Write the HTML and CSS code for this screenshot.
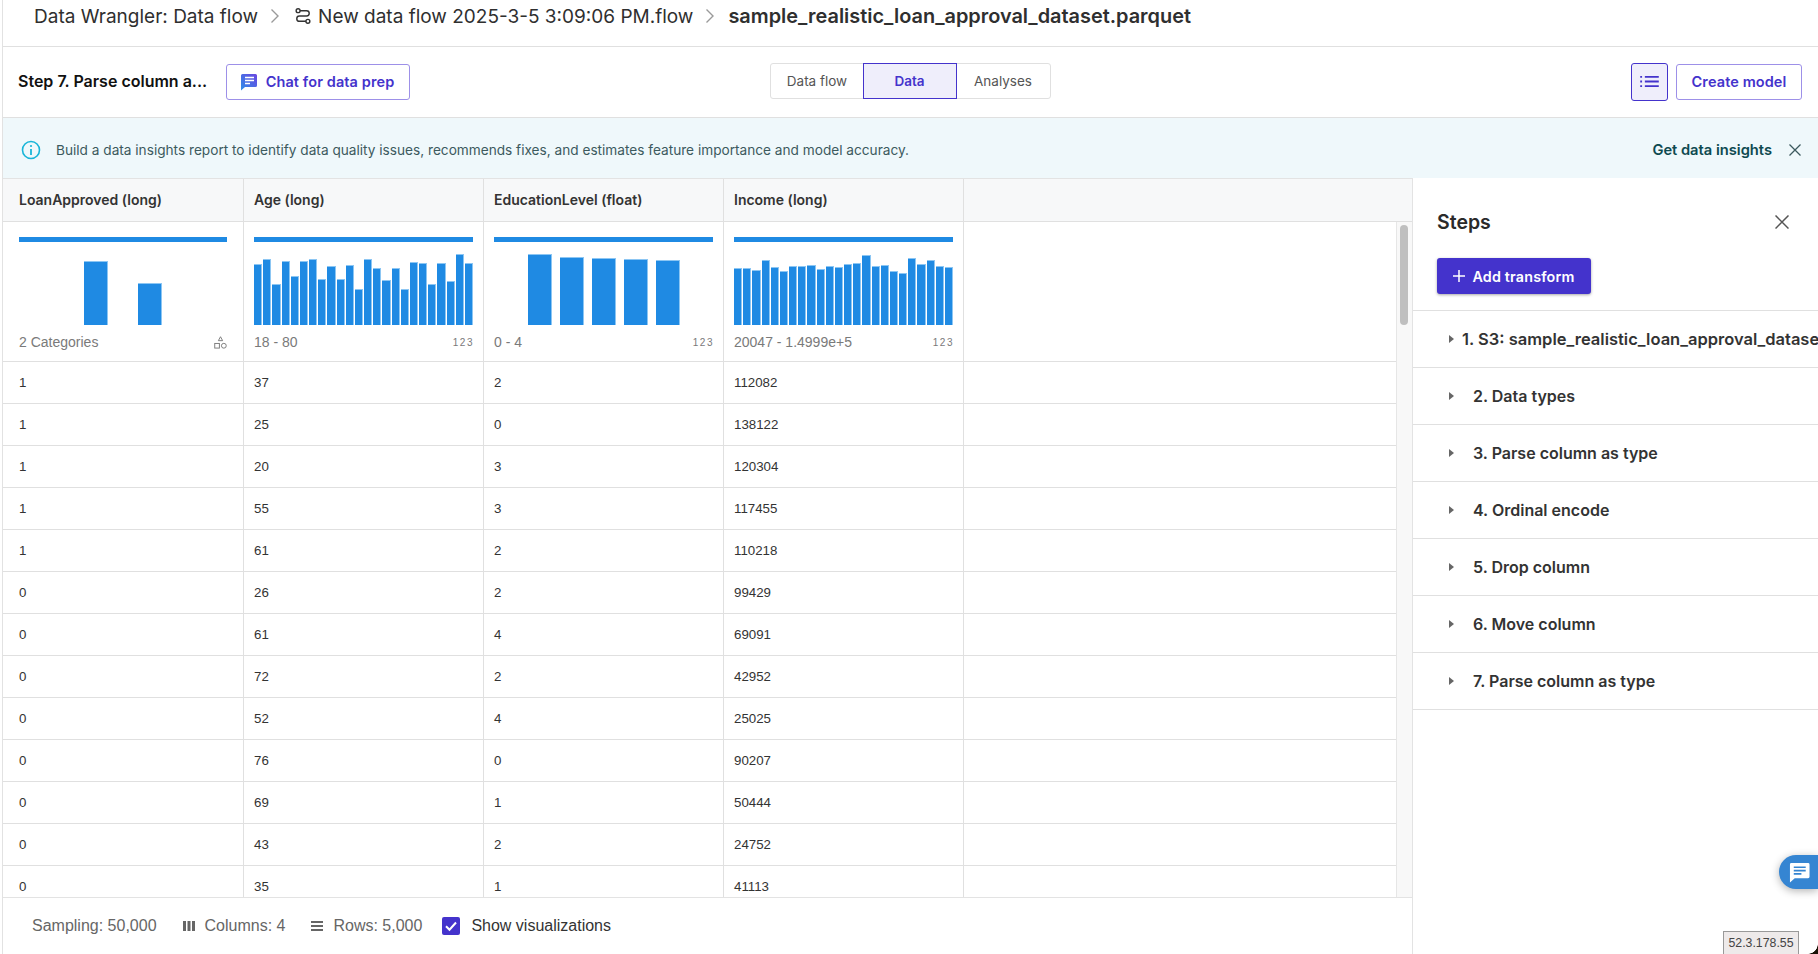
FILE: index.html
```html
<!DOCTYPE html>
<html lang="en">
<head>
<meta charset="utf-8">
<title>Data Wrangler: Data flow</title>
<link rel="stylesheet" href="styles.css">
</head>
<body>
<div class="app">
  <header class="crumbs">
    <span>Data Wrangler: Data flow</span>
    <svg class="chev chev-first" viewBox="0 0 10 16" width="10" height="16"><path d="M1.5 1.5 8 8l-6.500 6.500" fill="none" stroke="#9a9a9a" stroke-width="1.400"/></svg>
    <svg class="flow" viewBox="0 0 18 18" width="16" height="16"><g fill="none" stroke="#333" stroke-width="1.600"><circle cx="3.500" cy="3" r="2.200"/><circle cx="14.500" cy="15" r="2.200"/><path d="M5.700 3H13a3 3 0 0 1 0 6H5a3 3 0 0 0 0 6h7.300"/></g></svg>
    <span>New data flow 2025-3-5 3:09:06 PM.flow</span>
    <svg class="chev" viewBox="0 0 10 16" width="10" height="16"><path d="M1.5 1.5 8 8l-6.500 6.500" fill="none" stroke="#9a9a9a" stroke-width="1.400"/></svg>
    <strong>sample_realistic_loan_approval_dataset.parquet</strong>
  </header>

  <div class="toolbar">
    <div class="tool-left">
      <span class="step-name">Step 7. Parse column a...</span>
      <button class="btn btn-outline chat-btn">
        <svg viewBox="0 0 18 18" width="18" height="18"><defs><linearGradient id="cg" x1="0" y1="1" x2="1" y2="0"><stop offset="0" stop-color="#2f8fe8"/><stop offset="1" stop-color="#6a45e0"/></linearGradient></defs><path d="M2.500 1h13A1.500 1.500 0 0 1 17 2.500v10a1.500 1.500 0 0 1-1.500 1.500H5l-4 3.500V2.500A1.500 1.500 0 0 1 2.500 1z" fill="url(#cg)"/><path d="M5 4.500h9M5 7.500h9M5 10.500h5" stroke="#fff" stroke-width="1.500"/></svg>
        Chat for data prep
      </button>
    </div>
    <div class="tabs">
      <span class="tab">Data flow</span>
      <span class="tab tab-active">Data</span>
      <span class="tab">Analyses</span>
    </div>
    <div class="tool-right">
      <button class="list-btn" aria-label="Steps">
        <svg viewBox="0 0 20 14" width="19" height="13"><path d="M0 2h2M5 2h15M0 7h2M5 7h15M0 12h2M5 12h15" stroke="#4433cc" stroke-width="2"/></svg>
      </button>
      <button class="btn btn-outline create-btn">Create model</button>
    </div>
  </div>

  <div class="banner">
    <svg viewBox="0 0 20 20" width="20" height="20"><circle cx="10" cy="10" r="8.500" fill="none" stroke="#19b5d8" stroke-width="1.600"/><path d="M10 9v6" stroke="#19b5d8" stroke-width="1.800"/><circle cx="10" cy="6" r="1.100" fill="#19b5d8"/></svg>
    <span class="banner-text">Build a data insights report to identify data quality issues, recommends fixes, and estimates feature importance and model accuracy.</span>
    <a class="banner-link">Get data insights</a>
    <svg class="banner-x" viewBox="0 0 12 12" width="12" height="12"><path d="M.5.5l11 11M11.500.5l-11 11" stroke="#3c5a5e" stroke-width="1.300"/></svg>
  </div>

  <div class="main">
    <section class="grid">
      <div class="head">
        <div class="cell">LoanApproved (long)</div>
        <div class="cell">Age (long)</div>
        <div class="cell">EducationLevel (float)</div>
        <div class="cell">Income (long)</div>
      </div>
      <div class="body">
        <div class="rows">
          <div class="row viz">
            <div class="cell">
              <div class="topline"></div>
              <div class="chart chart-cat">
                <i style="height:64px"></i><i style="height:42px"></i>
              </div>
              <div class="meta"><span>2 Categories</span>
                <svg viewBox="0 0 14 14" width="13" height="13"><g fill="none" stroke="#777" stroke-width="1"><path d="M7 .8 9.300 5H4.700z"/><rect x=".8" y="8" width="5" height="5"/><circle cx="10.600" cy="10.500" r="2.600"/></g></svg>
              </div>
            </div>
            <div class="cell">
              <div class="topline"></div>
              <div class="chart">
                <i style="height:61px"></i><i style="height:66px"></i><i style="height:41px"></i><i style="height:64px"></i><i style="height:49px"></i><i style="height:64px"></i><i style="height:66px"></i><i style="height:46px"></i><i style="height:59px"></i><i style="height:46px"></i><i style="height:60px"></i><i style="height:36px"></i><i style="height:66px"></i><i style="height:57px"></i><i style="height:45px"></i><i style="height:57px"></i><i style="height:36px"></i><i style="height:63px"></i><i style="height:62px"></i><i style="height:41px"></i><i style="height:62px"></i><i style="height:44px"></i><i style="height:71px"></i><i style="height:62px"></i>
              </div>
              <div class="meta"><span>18 - 80</span><span class="num">123</span></div>
            </div>
            <div class="cell">
              <div class="topline"></div>
              <div class="chart chart-edu">
                <i style="height:71px"></i><i style="height:68px"></i><i style="height:67px"></i><i style="height:66px"></i><i style="height:65px"></i>
              </div>
              <div class="meta"><span>0 - 4</span><span class="num">123</span></div>
            </div>
            <div class="cell">
              <div class="topline"></div>
              <div class="chart">
                <i style="height:57px"></i><i style="height:57px"></i><i style="height:55px"></i><i style="height:65px"></i><i style="height:58px"></i><i style="height:54px"></i><i style="height:59px"></i><i style="height:59px"></i><i style="height:60px"></i><i style="height:56px"></i><i style="height:59px"></i><i style="height:58px"></i><i style="height:61px"></i><i style="height:62px"></i><i style="height:70px"></i><i style="height:59px"></i><i style="height:60px"></i><i style="height:54px"></i><i style="height:52px"></i><i style="height:67px"></i><i style="height:61px"></i><i style="height:65px"></i><i style="height:59px"></i><i style="height:58px"></i>
              </div>
              <div class="meta"><span>20047 - 1.4999e+5</span><span class="num">123</span></div>
            </div>
          </div>
          <div class="row"><div class="cell">1</div><div class="cell">37</div><div class="cell">2</div><div class="cell">112082</div></div>
          <div class="row"><div class="cell">1</div><div class="cell">25</div><div class="cell">0</div><div class="cell">138122</div></div>
          <div class="row"><div class="cell">1</div><div class="cell">20</div><div class="cell">3</div><div class="cell">120304</div></div>
          <div class="row"><div class="cell">1</div><div class="cell">55</div><div class="cell">3</div><div class="cell">117455</div></div>
          <div class="row"><div class="cell">1</div><div class="cell">61</div><div class="cell">2</div><div class="cell">110218</div></div>
          <div class="row"><div class="cell">0</div><div class="cell">26</div><div class="cell">2</div><div class="cell">99429</div></div>
          <div class="row"><div class="cell">0</div><div class="cell">61</div><div class="cell">4</div><div class="cell">69091</div></div>
          <div class="row"><div class="cell">0</div><div class="cell">72</div><div class="cell">2</div><div class="cell">42952</div></div>
          <div class="row"><div class="cell">0</div><div class="cell">52</div><div class="cell">4</div><div class="cell">25025</div></div>
          <div class="row"><div class="cell">0</div><div class="cell">76</div><div class="cell">0</div><div class="cell">90207</div></div>
          <div class="row"><div class="cell">0</div><div class="cell">69</div><div class="cell">1</div><div class="cell">50444</div></div>
          <div class="row"><div class="cell">0</div><div class="cell">43</div><div class="cell">2</div><div class="cell">24752</div></div>
          <div class="row"><div class="cell">0</div><div class="cell">35</div><div class="cell">1</div><div class="cell">41113</div></div>
        </div>
        <div class="scrollbar"><div class="thumb"></div></div>
      </div>
      <footer class="foot">
        <span class="foot-item">Sampling: 50,000</span>
        <span class="foot-item"><svg viewBox="0 0 12 10" width="12" height="10"><path d="M0 0h3v10H0zM4.500 0h3v10h-3zM9 0h3v10H9z" fill="#666"/></svg>Columns: 4</span>
        <span class="foot-item"><svg viewBox="0 0 12 10" width="12" height="10"><path d="M0 0h12v2H0zM0 4h12v2H0zM0 8h12v2H0z" fill="#666"/></svg>Rows: 5,000</span>
        <span class="check"><svg viewBox="0 0 18 18" width="18" height="18"><rect width="18" height="18" rx="2" fill="#4433cc"/><path d="M4 9.200l3.500 3.500L14 5.500" fill="none" stroke="#fff" stroke-width="2"/></svg>Show visualizations</span>
      </footer>
    </section>

    <aside class="panel">
      <div class="panel-head">
        <h2>Steps</h2>
        <svg viewBox="0 0 14 14" width="14" height="14"><path d="M.5.5l13 13M13.500.5l-13 13" stroke="#555" stroke-width="1.500"/></svg>
      </div>
      <button class="add-btn"><svg viewBox="0 0 12 12" width="12" height="12"><path d="M6 0v12M0 6h12" stroke="#fff" stroke-width="1.500"/></svg>Add transform</button>
      <ul class="steps">
        <li class="step step-first"><b class="caret"></b>1. S3: sample_realistic_loan_approval_dataset.parquet</li>
        <li class="step"><b class="caret"></b>2. Data types</li>
        <li class="step"><b class="caret"></b>3. Parse column as type</li>
        <li class="step"><b class="caret"></b>4. Ordinal encode</li>
        <li class="step"><b class="caret"></b>5. Drop column</li>
        <li class="step"><b class="caret"></b>6. Move column</li>
        <li class="step"><b class="caret"></b>7. Parse column as type</li>
      </ul>
    </aside>
  </div>
</div>

<button class="float-chat" aria-label="Feedback">
  <svg viewBox="0 0 22 22" width="21" height="21"><path d="M2 1h18a1.500 1.500 0 0 1 1.500 1.500v13A1.500 1.500 0 0 1 20 17H6l-5 4.500v-19A1.500 1.500 0 0 1 2 1z" fill="#fff"/><path d="M5 5.500h12.500M5 9h12.500M5 12.500h8" stroke="#3585d2" stroke-width="1.800"/></svg>
</button>
<div class="ip">52.3.178.55</div>
<div class="corner"></div>
</body>
</html>
```

FILE: styles.css
```css
* { box-sizing: border-box; }
html, body { margin: 0; padding: 0; height: 100%; overflow: hidden; background: #fff; }
body { font-family: Inter, "Liberation Sans", sans-serif; color: #222; }
button { font-family: inherit; }

.app {
  width: 1816px; height: 954px; margin-left: 2px;
  border-left: 1px solid #e2e2e2;
  display: flex; flex-direction: column;
}

.crumbs {
  height: 47px; flex: none; border-bottom: 1px solid #e0e0e0;
  display: flex; align-items: center; padding: 0 0 14px 31px;
  font-size: 19px; color: #2f2f2f; white-space: nowrap;
}
.crumbs strong { font-weight: 600; font-size: 19.900px; }
.chev { margin: 0 13px 0 12px; }
.chev-first { margin-right: 15px; }
.flow { margin-right: 7px; }

.toolbar {
  height: 71px; flex: none; border-bottom: 1px solid #e0e0e0;
  display: grid; grid-template-columns: 1fr auto 1fr; align-items: center;
  padding: 0 16px 1px 15px;
}
.tool-left { display: flex; align-items: center; }
.step-name { font-size: 16px; font-weight: 600; color: #111; width: 208px; white-space: nowrap; margin-bottom: 1px; }
.btn {
  height: 36px; background: #fff; border: 1px solid #9d90e8; border-radius: 3px;
  color: #4433cc; font-size: 14.500px; font-weight: 600; letter-spacing: .1px;
}
.chat-btn { width: 184px; display: flex; align-items: center; justify-content: center; gap: 8px; padding: 0 2px 0 0; }
.tabs { display: flex; height: 36px; border: 1px solid #e0e0e0; border-radius: 3px; font-size: 13.500px; color: #555; margin-top: -2px; }
.tab { width: 93px; display: flex; align-items: center; justify-content: center; }
.tab-active { margin: -1px 0 -1px -1px; width: 94px; background: #efeefb; border: 1px solid #4433cc; color: #4433cc; font-weight: 600; height: 36px; }
.tool-right { display: flex; align-items: center; justify-content: flex-end; gap: 8px; }
.list-btn {
  width: 37px; height: 38px; background: #efeefb; border: 1px solid #4433cc; border-radius: 3px;
  display: flex; align-items: center; justify-content: center; padding: 0;
}
.create-btn { width: 126px; padding: 0; }

.banner {
  height: 60px; flex: none; background: #eff8fb;
  display: flex; align-items: center; padding: 3px 17px 0 18px;
  font-size: 13.650px; color: #3c5a5e;
}
.banner-text { margin-left: 15px; flex: 1; }
.banner-link { font-weight: 600; font-size: 14.700px; color: #0e4a50; margin-right: 17px; }

.main { flex: 1; min-height: 0; display: flex; }
.grid { width: 1409px; flex: none; display: flex; flex-direction: column; border-top: 1px solid #e3e3e3; }
.head {
  height: 43px; flex: none; display: flex; background: #f7f8f9;
  border-bottom: 1px solid #e0e0e0; font-size: 14px; font-weight: 600; color: #333;
}
.head .cell { align-items: center; padding-bottom: 2px; }
.cell {
  width: 240px; flex: none; border-right: 1px solid #e0e0e0;
  display: flex; padding: 0 10px;
}
.cell:first-child { width: 241px; padding-left: 16px; padding-right: 16px; }
.body { flex: 1; min-height: 0; display: flex; overflow: hidden; }
.rows { flex: 1; min-width: 0; }
.row {
  height: 42px; display: flex; border-bottom: 1px solid #e0e0e0;
  font-family: "Liberation Sans", sans-serif; font-size: 13.300px; color: #333;
}
.row .cell { align-items: center; }
.row.viz { height: 140px; }
.row.viz .cell { display: block; padding-top: 15px; font-size: 14px; }
.topline { height: 5px; background: #1f8ae3; }
.chart { height: 83px; display: flex; align-items: flex-end; gap: 1px; }
.chart i { flex: 1; display: block; background: #1f8ae3; border-top: 1px solid #8cc6f3; border-right: 1px solid #8cc6f3; }
.chart-cat { padding-left: 65px; gap: 30px; }
.chart-cat i { flex: none; width: 24px; }
.chart-edu { padding-left: 34px; gap: 8px; }
.chart-edu i { flex: none; width: 24px; }
.meta { display: flex; justify-content: space-between; align-items: center; margin-top: 9px; color: #7a7a7a; font-size: 14px; }
.num { font-size: 10px; letter-spacing: 1.500px; margin-right: -1px; }
.scrollbar { width: 16px; flex: none; background: #f8f8f8; border-left: 1px solid #e6e6e6; padding: 3px 3px; }
.thumb { width: 8px; height: 100px; background: #bfbfbf; border-radius: 4px; }

.foot {
  height: 57px; flex: none; border-top: 1px solid #e3e3e3;
  display: flex; align-items: center; padding-left: 29px; padding-bottom: 1px;
  font-family: "Liberation Sans", sans-serif; font-size: 16px; color: #666;
}
.foot-item { display: flex; align-items: center; gap: 10px; margin-right: 26px; }
.check { display: flex; align-items: center; gap: 11px; color: #333; margin-left: -6px; font-size: 16px; }

.panel { flex: 1; min-width: 0; border-left: 1px solid #e3e3e3; overflow: hidden; background: #fff; }
.panel-head { display: flex; align-items: center; justify-content: space-between; padding: 25px 29px 0 24px; height: 62px; }
.panel-head h2 { margin: 0; font-size: 19.500px; font-weight: 600; color: #2a2a2a; }
.add-btn {
  display: flex; align-items: center; justify-content: center; gap: 7px;
  width: 154px; height: 36px; margin: 18px 0 16px 24px; padding: 0;
  background: #4433cc; color: #fff; border: 0; border-radius: 3px;
  font-size: 14.300px; font-weight: 600; letter-spacing: .2px;
  box-shadow: 0 1px 3px rgba(0,0,0,.35);
}
.steps { list-style: none; margin: 0; padding: 0; border-top: 1px solid #e0e0e0; }
.step {
  height: 57px; display: flex; align-items: center; padding-left: 36px;
  border-bottom: 1px solid #e0e0e0; font-size: 16px; font-weight: 600; color: #333; white-space: nowrap;
}
.step-first { font-size: 16.500px; }
.caret {
  width: 0; height: 0; margin-right: 19px;
  border-left: 5px solid #666; border-top: 4.500px solid transparent; border-bottom: 4.500px solid transparent;
}
.step-first .caret { margin-right: 8px; }

.float-chat {
  position: absolute; left: 1779px; top: 855px; width: 39px; height: 34px; padding: 0 0 0 10px;
  background: #3585d2; border: 0; border-radius: 17px 0 0 17px;
  box-shadow: 0 2px 8px rgba(0,0,0,.3); display: flex; align-items: center;
}
.ip {
  position: absolute; left: 1723px; top: 931px; width: 76px; height: 23px;
  background: #eeeaea; border: 1px solid #999; border-bottom: 0;
  font: 12.300px "Liberation Sans", sans-serif; color: #444; display: flex; align-items: center; justify-content: center;
}
.corner {
  position: absolute; right: 0; bottom: 0; width: 10px; height: 10px;
  background: radial-gradient(circle at 0 0, transparent 9.500px, #1a1206 10px);
}
```
